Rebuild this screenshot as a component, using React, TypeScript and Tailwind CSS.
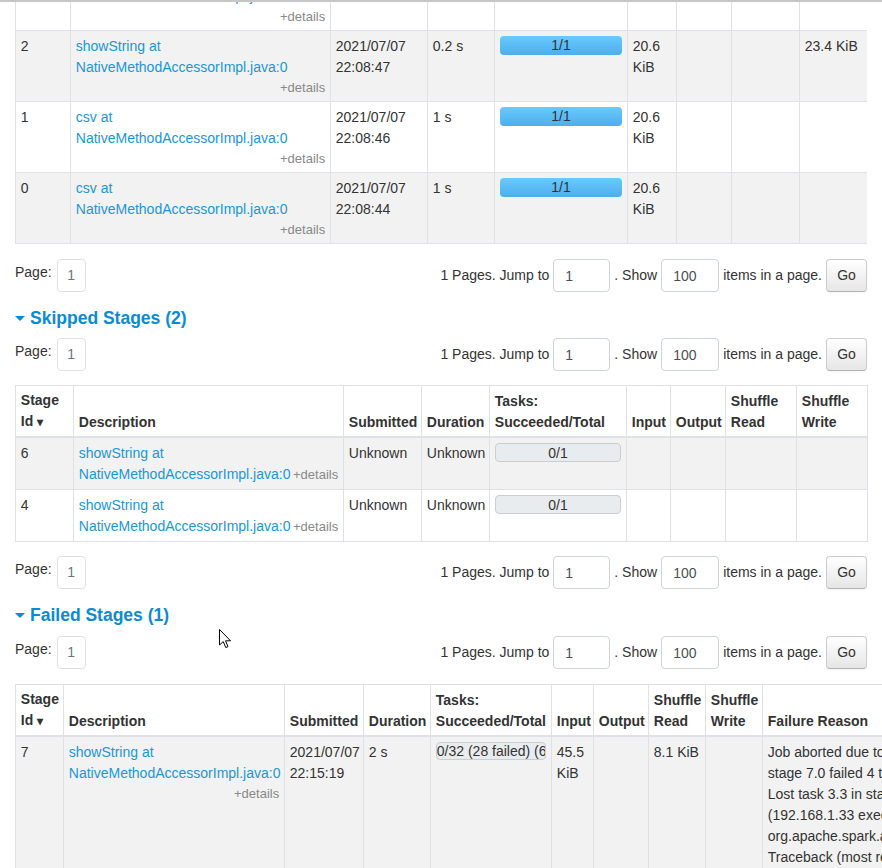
import type { ReactNode } from 'react';

function cx(...parts: (string | false | undefined)[]) {
  return parts.filter(Boolean).join(' ');
}

const LINK = 'text-[#1a96d9]';
const TD = 'border border-[#dee2e6] px-[4.8px] py-[4.5px] align-top';
const TH = 'border border-[#dee2e6] border-b-2 px-[4.8px] py-[3.5px] align-bottom text-left font-bold';

function Desc({ name, inline }: { name: string; inline?: boolean }) {
  return (
    <>
      <a className={LINK}>{name} at NativeMethodAccessorImpl.java:0</a>{' '}
      <span className={cx('float-right text-[13px] text-[#888]', inline ? 'leading-[21px]' : 'leading-[19px]')}>
        +details
      </span>
    </>
  );
}

function Progress({ text, done, thin }: { text: string; done?: boolean; thin?: boolean }) {
  return (
    <div
      className={cx(
        'overflow-hidden whitespace-nowrap rounded-[4px] text-center text-[#333]',
        thin ? 'h-[18px] leading-[16px]' : 'h-[19px] leading-[19px]',
        done ? 'bg-linear-to-b from-[#68caff] to-[#4eaeea]' : 'border border-[#c9ced3] bg-[#e9ecef] leading-[17px]',
      )}
    >
      {text}
    </div>
  );
}

function Pager() {
  return (
    <div className="flex items-start justify-between">
      <div className="flex items-start">
        <span className="pt-[3px]">Page:</span>
        <span className="ml-[5px] flex h-[33px] w-[29px] items-center justify-center rounded-[4px] border border-[#dee2e6] text-[#6c757d]">
          1
        </span>
      </div>
      <div className="flex items-center gap-[4px]">
        <span>1 Pages. Jump to</span>
        <input
          readOnly
          value="1"
          className="h-[33px] w-[57px] rounded-[4px] border border-[#ced4da] pl-[11px] text-[#495057] outline-none"
        />
        <span>. Show</span>
        <input
          readOnly
          value="100"
          className="h-[33px] w-[58px] rounded-[4px] border border-[#ced4da] pl-[11px] text-[#495057] outline-none"
        />
        <span>items in a page.</span>
        <button
          type="button"
          className="h-[33px] w-[41px] rounded-[4px] border border-[#ccc] border-b-[#b3b3b3] bg-linear-to-b from-white to-[#e6e6e6] text-[#333] shadow-[0_1px_2px_rgba(0,0,0,0.05)]"
        >
          Go
        </button>
      </div>
    </div>
  );
}

function Heading({ children, className }: { children: ReactNode; className?: string }) {
  return (
    <h4 className={cx('flex items-center text-[17.5px] font-bold leading-[22px] text-[#0b8bd3]', className)}>
      <span className="mr-[5px] h-0 w-0 border-x-[5px] border-t-[5px] border-x-transparent border-t-[#0b8bd3]" />
      {children}
    </h4>
  );
}

function StageHead({ failed }: { failed?: boolean }) {
  return (
    <thead>
      <tr>
        <th className={TH}>
          Stage Id <span className="text-[12px]">▾</span>
        </th>
        <th className={TH}>Description</th>
        <th className={TH}>Submitted</th>
        <th className={TH}>Duration</th>
        <th className={TH}>Tasks: Succeeded/Total</th>
        <th className={TH}>Input</th>
        <th className={TH}>Output</th>
        <th className={TH}>Shuffle Read</th>
        <th className={TH}>Shuffle Write</th>
        {failed && <th className={TH}>Failure Reason</th>}
      </tr>
    </thead>
  );
}

const completed = [
  { id: '3', name: 'showString', date: '22:08:49', dur: '0.1 s', write: '', stripe: false },
  { id: '2', name: 'showString', date: '22:08:47', dur: '0.2 s', write: '23.4 KiB', stripe: true },
  { id: '1', name: 'csv', date: '22:08:46', dur: '1 s', write: '', stripe: false },
  { id: '0', name: 'csv', date: '22:08:44', dur: '1 s', write: '', stripe: true },
];

export default function App() {
  return (
    <div className="relative h-[868px] w-[882px] overflow-hidden bg-white font-['Liberation_Sans',Arial,sans-serif] text-[14px] leading-[21px] text-[#333]">
      <div className="h-[2px] bg-[#c6c6c6]" />

      <div className="px-[15px]">
        <div className="h-[242px] overflow-hidden">
          <table className="-mt-[43px] w-[852px] table-fixed border-collapse">
            <colgroup>
              <col className="w-[55px]" />
              <col className="w-[260px]" />
              <col className="w-[97px]" />
              <col className="w-[67px]" />
              <col className="w-[133px]" />
              <col className="w-[49px]" />
              <col className="w-[55px]" />
              <col className="w-[68px]" />
              <col className="w-[68px]" />
            </colgroup>
            <tbody>
              {completed.map((r) => (
                <tr key={r.id} className={r.stripe ? 'bg-[#f2f2f2]' : 'bg-white'}>
                  <td className={TD}>{r.id}</td>
                  <td className={TD}>
                    <Desc name={r.name} />
                  </td>
                  <td className={TD}>
                    2021/07/07
                    <br />
                    {r.date}
                  </td>
                  <td className={TD}>{r.dur}</td>
                  <td className={TD}>
                    <Progress text="1/1" done />
                  </td>
                  <td className={TD}>20.6 KiB</td>
                  <td className={TD} />
                  <td className={TD} />
                  <td className={TD}>{r.write}</td>
                </tr>
              ))}
            </tbody>
          </table>
        </div>

        <div className="mt-[15px]">
          <Pager />
        </div>

        <Heading className="mt-[15px] mb-[9px]">Skipped Stages (2)</Heading>
        <Pager />

        <table className="mt-[14px] w-[852px] table-fixed border-collapse">
          <colgroup>
            <col className="w-[58px]" />
            <col className="w-[270px]" />
            <col className="w-[78px]" />
            <col className="w-[68px]" />
            <col className="w-[137px]" />
            <col className="w-[44px]" />
            <col className="w-[55px]" />
            <col className="w-[71px]" />
            <col className="w-[71px]" />
          </colgroup>
          <StageHead />
          <tbody>
            {['6', '4'].map((id, i) => (
              <tr key={id} className={i === 0 ? 'bg-[#f2f2f2]' : 'bg-white'}>
                <td className={TD}>{id}</td>
                <td className={TD}>
                  <Desc name="showString" inline />
                </td>
                <td className={TD}>Unknown</td>
                <td className={TD}>Unknown</td>
                <td className={TD}>
                  <Progress text="0/1" />
                </td>
                <td className={TD} />
                <td className={TD} />
                <td className={TD} />
                <td className={TD} />
              </tr>
            ))}
          </tbody>
        </table>

        <div className="mt-[14px]">
          <Pager />
        </div>

        <Heading className="mt-[15px] mb-[10px]">Failed Stages (1)</Heading>
        <Pager />

        <table className="mt-[15px] w-[1037px] table-fixed border-collapse">
          <colgroup>
            <col className="w-[48px]" />
            <col className="w-[221px]" />
            <col className="w-[79px]" />
            <col className="w-[67px]" />
            <col className="w-[121px]" />
            <col className="w-[42px]" />
            <col className="w-[55px]" />
            <col className="w-[57px]" />
            <col className="w-[57px]" />
            <col className="w-[290px]" />
          </colgroup>
          <StageHead failed />
          <tbody>
            <tr className="bg-[#f2f2f2]">
              <td className={TD}>7</td>
              <td className={TD}>
                <Desc name="showString" />
              </td>
              <td className={TD}>
                2021/07/07
                <br />
                22:15:19
              </td>
              <td className={TD}>2 s</td>
              <td className={TD}>
                <Progress text="0/32 (28 failed) (6 killed: Stage cancelled)" thin />
              </td>
              <td className={TD}>45.5 KiB</td>
              <td className={TD} />
              <td className={TD}>8.1 KiB</td>
              <td className={TD} />
              <td className={TD}>
                Job aborted due to stage failure: Task 3 in stage 7.0 failed 4 times, most recent failure: Lost task 3.3
                in stage 7.0 (TID 60) (192.168.1.33 executor driver): org.apache.spark.api.python.PythonException:
                Traceback (most recent call last): File "pyspark/worker.py", line 604, in main
              </td>
            </tr>
          </tbody>
        </table>
      </div>

      {/* mouse pointer */}
      <svg className="absolute left-[219px] top-[629px]" width="13" height="20" viewBox="0 0 13 20">
        <path d="M0.5 0.5 L0.5 16 L4.2 12.6 L6.8 18.6 L9 17.6 L6.5 11.8 L11.5 11.8 Z" fill="white" stroke="black" strokeWidth="1" strokeLinejoin="round" />
      </svg>
    </div>
  );
}
